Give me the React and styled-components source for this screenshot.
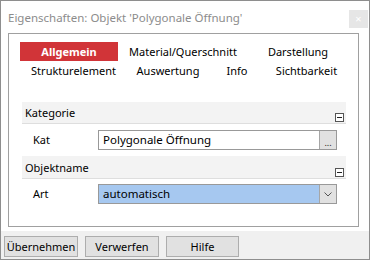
import React from "react";
import styled, { createGlobalStyle } from "styled-components";

const Global = createGlobalStyle`
  html, body { margin: 0; padding: 0; background: #ffffff; }
  body { font-family: "Noto Sans", "Open Sans", sans-serif; font-size: 11px; color: #000; }
  * { box-sizing: border-box; }
`;

const Window = styled.div`
  width: 370px;
  height: 260px;
  border: 1px solid #8e8e8e;
  background: #ffffff;
  display: flex;
  flex-direction: column;
`;

const TitleBar = styled.div`
  height: 32px;
  display: flex;
  align-items: flex-start;
  justify-content: space-between;
  padding: 0 1px 0 7px;
`;

const Title = styled.div`
  margin-top: 9px;
  font-size: 11.5px;
  color: #8c8c8c;
  white-space: nowrap;
`;

const CloseButton = styled.div`
  margin-top: 9px;
  width: 19px;
  height: 18px;
  background: #e6e6e6;
  color: #ffffff;
  font-size: 11px;
  line-height: 18px;
  text-align: center;
`;

const Panel = styled.div`
  margin: 0 10px 0 7px;
  height: 194px;
  border: 1px solid #a0a0a0;
  padding: 8px 11px 0 11px;
  display: flex;
  flex-direction: column;
`;

const TabRow = styled.div`
  display: grid;
  grid-template-columns: ${(p) => p.$cols};
  height: 19px;
`;

const Tab = styled.div`
  display: flex;
  align-items: center;
  justify-content: center;
  white-space: nowrap;
  font-size: 11px;
  background: ${(p) => (p.$active ? "#d13438" : "transparent")};
  color: ${(p) => (p.$active ? "#ffffff" : "#000000")};
  font-weight: ${(p) => (p.$active ? 700 : 400)};
`;

const Sections = styled.div`
  margin: 22px 0 0 2px;
  width: 324px;
  display: flex;
  flex-direction: column;
`;

const SectionHeader = styled.div`
  height: ${(p) => p.$h}px;
  background: #f3f3f3;
  border-bottom: 1px solid #dedede;
  display: flex;
  align-items: center;
  justify-content: space-between;
  padding: 0 2px 0 3px;
`;

const HeaderText = styled.span`
  font-size: 11px;
`;

const Collapse = styled.div`
  align-self: flex-end;
  margin-bottom: 1px;
  width: 9px;
  height: 9px;
  border: 1px solid #555;
  background: #fff;
  display: flex;
  align-items: center;
  justify-content: center;
  &::after {
    content: "";
    width: 5px;
    height: 1px;
    background: #222;
  }
`;

const FieldRow = styled.div`
  height: ${(p) => p.$h}px;
  display: grid;
  grid-template-columns: 76px 239px;
  align-items: start;
  padding-top: ${(p) => p.$pt}px;
`;

const Label = styled.div`
  padding-left: 11px;
  line-height: 20px;
`;

const Field = styled.div`
  display: flex;
  height: 20px;
  border: 1px solid #999999;
`;

const FieldValue = styled.div`
  flex: 1;
  padding-left: 4px;
  line-height: 18px;
  font-size: 11.5px;
  background: ${(p) => (p.$selected ? "#a6c8f0" : "#ffffff")};
  white-space: nowrap;
`;

const FieldButton = styled.div`
  width: 17px;
  border-left: 1px solid #a6a6a6;
  background: #e1e1e1;
  display: flex;
  align-items: center;
  justify-content: center;
  color: #222;
`;

const Dots = styled.span`
  margin-top: 5px;
  font-size: 9px;
`;

const Footer = styled.div`
  margin-top: auto;
  height: 28px;
  background: #f0f0f0;
  display: flex;
  align-items: flex-start;
  gap: 7px;
  padding: 5px 0 0 3px;
`;

const Button = styled.div`
  width: ${(p) => p.$w}px;
  height: 21px;
  border: 1px solid #adadad;
  background: #e1e1e1;
  display: flex;
  align-items: center;
  justify-content: center;
  font-size: 11px;
`;

export default function App() {
  return (
    <>
      <Global />
      <Window>
        <TitleBar>
          <Title>Eigenschaften: Objekt 'Polygonale Öffnung'</Title>
          <CloseButton>×</CloseButton>
        </TitleBar>
        <Panel>
          <TabRow $cols="98px 130px 100px">
            <Tab $active>Allgemein</Tab>
            <Tab>Material/Querschnitt</Tab>
            <Tab>Darstellung</Tab>
          </TabRow>
          <TabRow $cols="107px 82px 56px 83px">
            <Tab>Strukturelement</Tab>
            <Tab>Auswertung</Tab>
            <Tab>Info</Tab>
            <Tab>Sichtbarkeit</Tab>
          </TabRow>
          <Sections>
            <SectionHeader $h={22}>
              <HeaderText>Kategorie</HeaderText>
              <Collapse />
            </SectionHeader>
            <FieldRow $h={32} $pt={6}>
              <Label>Kat</Label>
              <Field>
                <FieldValue>Polygonale Öffnung</FieldValue>
                <FieldButton>
                  <Dots>...</Dots>
                </FieldButton>
              </Field>
            </FieldRow>
            <SectionHeader $h={23}>
              <HeaderText>Objektname</HeaderText>
              <Collapse />
            </SectionHeader>
            <FieldRow $h={30} $pt={5}>
              <Label>Art</Label>
              <Field>
                <FieldValue $selected>automatisch</FieldValue>
                <FieldButton>
                  <svg width="8" height="5" viewBox="0 0 8 5">
                    <path d="M0.5 0.5 L4 4 L7.5 0.5" fill="none" stroke="#555" strokeWidth="1" />
                  </svg>
                </FieldButton>
              </Field>
            </FieldRow>
          </Sections>
        </Panel>
        <Footer>
          <Button $w={74}>Übernehmen</Button>
          <Button $w={74}>Verwerfen</Button>
          <Button $w={73}>Hilfe</Button>
        </Footer>
      </Window>
    </>
  );
}
